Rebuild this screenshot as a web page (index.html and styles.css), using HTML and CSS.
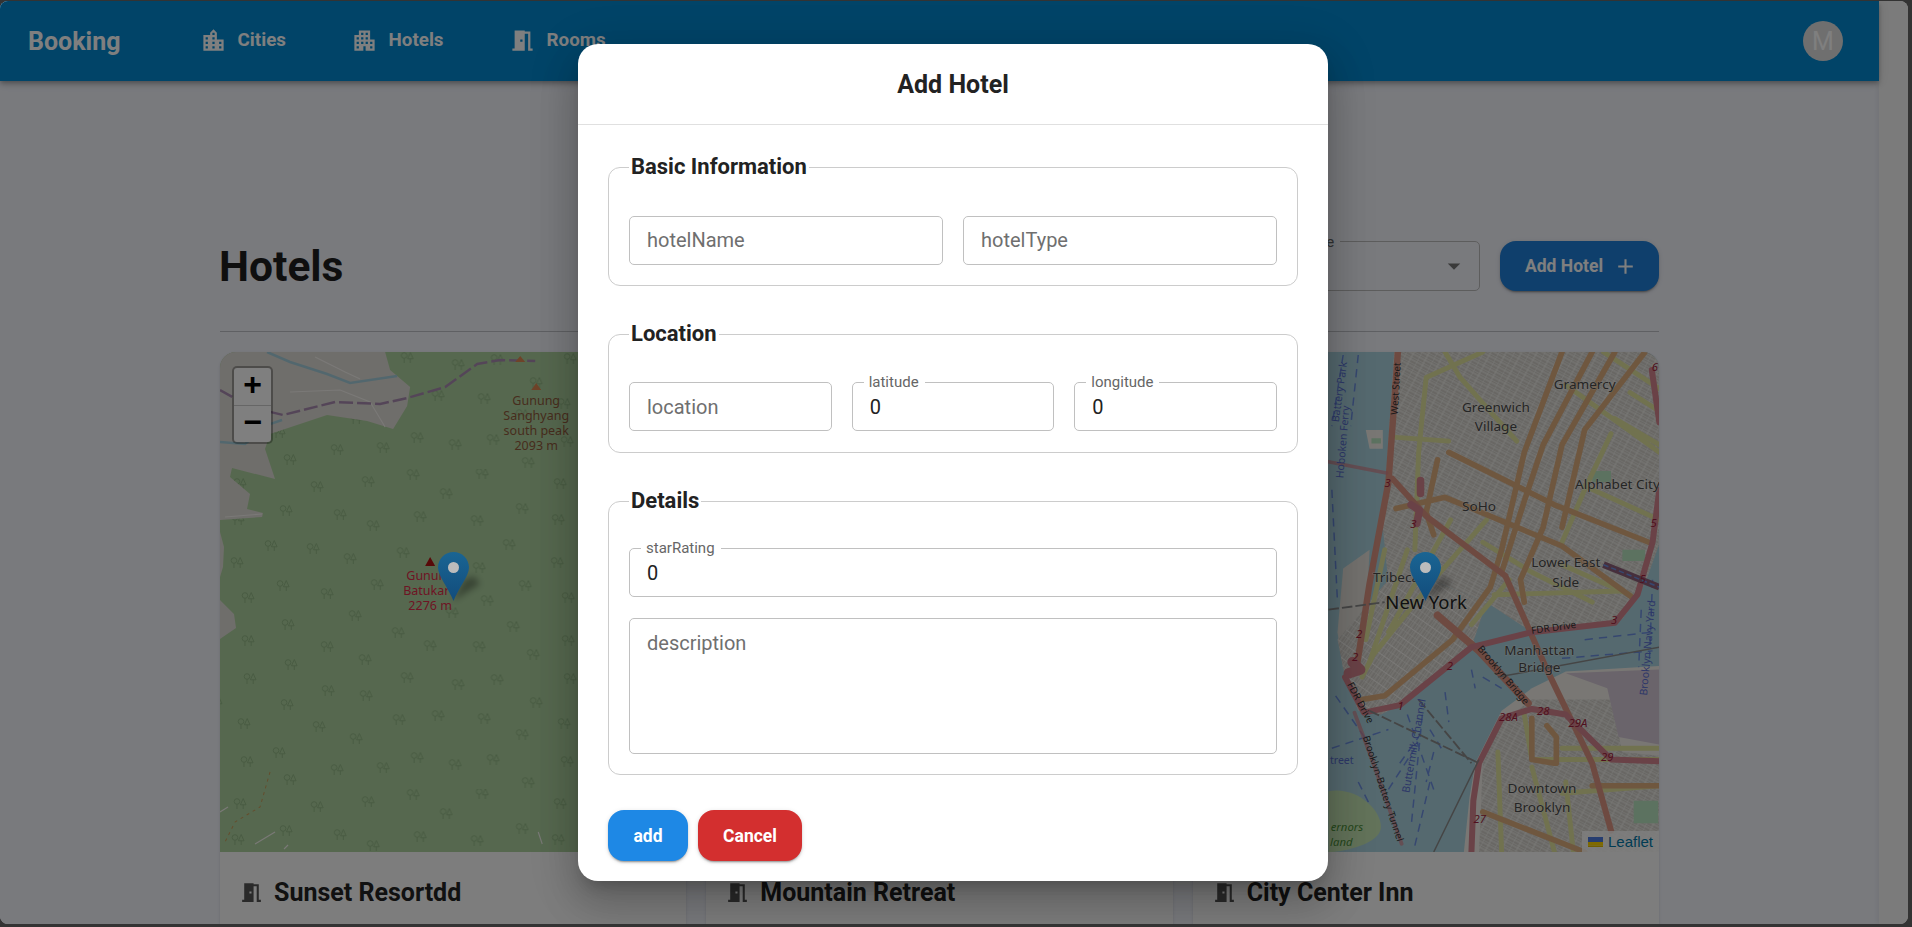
FILE: index.html

```html
<!DOCTYPE html>
<html>
<head>
    <title>Hotels</title>
    <link rel="stylesheet" href="styles.css">
</head>
<body>
    <div class="window">
        <div class="page">
            <header class="app-bar">
                <div class="brand">Booking</div>
                <nav class="nav">
                    <a class="nav-link">
                        <svg viewBox="0 0 24 24"><path d="M15 11V5l-3-3-3 3v2H3v14h18V11h-6zm-8 8H5v-2h2v2zm0-4H5v-2h2v2zm0-4H5V9h2v2zm6 8h-2v-2h2v2zm0-4h-2v-2h2v2zm0-4h-2V9h2v2zm0-4h-2V5h2v2zm6 12h-2v-2h2v2zm0-4h-2v-2h2v2z"/></svg>
                        Cities
                    </a>
                    <a class="nav-link">
                        <svg viewBox="0 0 24 24"><path d="M17 11V3H7v4H3v14h8v-4h2v4h8V11h-4zM7 19H5v-2h2v2zm0-4H5v-2h2v2zm0-4H5V9h2v2zm4 4H9v-2h2v2zm0-4H9V9h2v2zm0-4H9V5h2v2zm4 8h-2v-2h2v2zm0-4h-2V9h2v2zm0-4h-2V5h2v2zm4 12h-2v-2h2v2zm0-4h-2v-2h2v2z"/></svg>
                        Hotels
                    </a>
                    <a class="nav-link">
                        <svg viewBox="0 0 24 24"><path d="M14 6v15H3v-2h2V3h9v1h5v15h2v2h-4V6h-3zm-4 5v2h2v-2h-2z"/></svg>
                        Rooms
                    </a>
                </nav>
                <div class="avatar">M</div>
            </header>

            <main class="content">
                <div class="title-row">
                    <h1>Hotels</h1>
                    <div class="title-actions">
                        <div class="select-box">
                            <span class="select-label">hotelType</span>
                            <svg viewBox="0 0 24 24"><path d="M7 10l5 5 5-5z"/></svg>
                        </div>
                        <button class="add-hotel">
                            Add Hotel
                            <svg viewBox="0 0 24 24"><path d="M19 13h-6v6h-2v-6H5v-2h6V5h2v6h6v2z"/></svg>
                        </button>
                    </div>
                </div>
                <div class="divider"></div>

                <div class="cards">
                    <article class="card">
                        <div class="map">
                            <svg class="map-art" viewBox="0 0 466 500" preserveAspectRatio="none">
                                <defs>
                                    <g id="tree">
                                        <circle cx="-3" cy="-2.5" r="2.8"/>
                                        <path d="M-3 .3V5M3.2-5.5L6 .8H.4zM3.2.8V5"/>
                                    </g>
                                    <pattern id="forest" x="37" y="117" width="320" height="320" patternUnits="userSpaceOnUse">
                                        <g transform="translate(-37 -117)" fill="none" stroke="#8fb382" stroke-width=".9">
                                            <use href="#tree" x="97" y="135"/><use href="#tree" x="148" y="130"/><use href="#tree" x="193" y="123"/>
                                            <use href="#tree" x="262" y="122"/><use href="#tree" x="308" y="431"/><use href="#tree" x="340" y="132"/>
                                            <use href="#tree" x="226" y="142"/><use href="#tree" x="302" y="157"/><use href="#tree" x="338" y="168"/>
                                            <use href="#tree" x="257" y="169"/><use href="#tree" x="200" y="165"/><use href="#tree" x="153" y="174"/>
                                            <use href="#tree" x="120" y="163"/><use href="#tree" x="66" y="159"/><use href="#tree" x="51" y="194"/>
                                            <use href="#tree" x="93" y="197"/><use href="#tree" x="130" y="207"/><use href="#tree" x="183" y="201"/>
                                            <use href="#tree" x="259" y="216"/><use href="#tree" x="289" y="193"/><use href="#tree" x="337" y="211"/>
                                            <use href="#tree" x="63" y="234"/><use href="#tree" x="107" y="242"/><use href="#tree" x="157" y="233"/>
                                            <use href="#tree" x="305" y="234"/><use href="#tree" x="267" y="249"/><use href="#tree" x="348" y="246"/>
                                            <use href="#tree" x="68" y="273"/><use href="#tree" x="135" y="264"/><use href="#tree" x="232" y="261"/>
                                            <use href="#tree" x="178" y="281"/><use href="#tree" x="293" y="275"/><use href="#tree" x="348" y="289"/>
                                            <use href="#tree" x="107" y="295"/><use href="#tree" x="210" y="294"/><use href="#tree" x="259" y="295"/>
                                            <use href="#tree" x="313" y="303"/><use href="#tree" x="145" y="308"/><use href="#tree" x="71" y="313"/>
                                            <use href="#tree" x="350" y="327"/><use href="#tree" x="187" y="326"/><use href="#tree" x="238" y="333"/>
                                            <use href="#tree" x="277" y="328"/><use href="#tree" x="108" y="339"/><use href="#tree" x="146" y="344"/>
                                            <use href="#tree" x="67" y="353"/><use href="#tree" x="316" y="351"/><use href="#tree" x="344" y="372"/>
                                            <use href="#tree" x="99" y="375"/><use href="#tree" x="179" y="368"/><use href="#tree" x="218" y="364"/>
                                            <use href="#tree" x="264" y="367"/><use href="#tree" x="136" y="387"/><use href="#tree" x="302" y="383"/>
                                            <use href="#tree" x="59" y="401"/><use href="#tree" x="347" y="410"/><use href="#tree" x="117" y="418"/>
                                            <use href="#tree" x="163" y="416"/><use href="#tree" x="197" y="406"/><use href="#tree" x="235" y="413"/>
                                            <use href="#tree" x="273" y="408"/><use href="#tree" x="70" y="428"/>
                                        </g>
                                    </pattern>
                                </defs>
                                <rect width="466" height="500" fill="#add19e"/>
                                <rect width="466" height="500" fill="url(#forest)"/>
                                <path fill="#dfdcd6" d="M0 0H165L170 18 190 35 187 54 173 77 147 69 107 63 50 82 45 97 55 127 12 116 10 125 30 142 27 157 43 161 42 165 0 168Z"/>
                                <path fill="#dfdcd6" d="M0 180 4 195 3 215 0 225ZM0 248 14 262 16 276 0 287Z"/>
                                <path fill="none" stroke="#a5cfdc" stroke-width="2.5" d="M47 0 70 10 107 22 130 31 177 24"/>
                                <path fill="none" stroke="#a5cfdc" stroke-width="2.5" d="M0 90 25 92 50 72 62 68"/>
                                <path fill="none" stroke="#f4f2ee" stroke-width="1.1" d="M95 5 125 20 140 27M70 40 120 38 150 50 165 75M5 165 42 162M0 460 8 455M35 492 55 480M64 497 68 493M318 480 322 492"/>
                                <path fill="none" stroke="#a98bb0" stroke-width="2.5" stroke-dasharray="14 4" d="M0 38 30 55 63 63 115 50 160 52 187 46 225 35 257 12 280 8 315 9"/>
                                <path fill="none" stroke="#c79a5b" stroke-width="1" stroke-dasharray="3 4" d="M50 420 40 455 15 470 5 490"/>
                                <path fill="#dd8753" d="M300 4 305 10H295ZM316 31 321 38H311Z"/>
                                <path fill="#b01212" d="M210 205 215 214H205Z"/>
                                <g class="peak-label">
                                    <text x="316" y="53">Gunung</text>
                                    <text x="316" y="68">Sanghyang</text>
                                    <text x="316" y="83">south peak</text>
                                    <text x="316" y="98">2093 m</text>
                                </g>
                                <g class="peak-label red">
                                    <text x="210" y="228">Gunung</text>
                                    <text x="210" y="243">Batukaru</text>
                                    <text x="210" y="258">2276 m</text>
                                </g>
                            </svg>
                            <div class="zoom-control">
                                <a>+</a>
                                <a>&minus;</a>
                            </div>
                            <svg class="marker" viewBox="0 0 31 49">
                                <defs>
                                    <linearGradient id="pin-a" x1="0" y1="0" x2="0" y2="1"><stop offset="0" stop-color="#1a6593"/><stop offset="1" stop-color="#124c7c"/></linearGradient>
                                    <filter id="pin-blur" x="-50%" y="-50%" width="200%" height="200%"><feGaussianBlur stdDeviation="3"/></filter>
                                </defs>
                                <path d="M15 49 42 32 36 24 26 28Z" fill="#000" opacity=".32" filter="url(#pin-blur)"/>
                                <path fill="url(#pin-a)" d="M15.5 0C7 0 0 6.8 0 15.5 0 24 11 37 15.5 49 20 37 31 24 31 15.5 31 6.8 24 0 15.5 0Z"/>
                                <circle cx="15.5" cy="15.5" r="5.5" fill="#bcbcbc"/>
                            </svg>
                        </div>
                        <h3 class="card-title">
                            <svg viewBox="0 0 24 24"><path d="M14 6v15H3v-2h2V3h9v1h5v15h2v2h-4V6h-3zm-4 5v2h2v-2h-2z"/></svg>
                            Sunset Resortdd
                        </h3>
                    </article>

                    <article class="card">
                        <div class="map"></div>
                        <h3 class="card-title">
                            <svg viewBox="0 0 24 24"><path d="M14 6v15H3v-2h2V3h9v1h5v15h2v2h-4V6h-3zm-4 5v2h2v-2h-2z"/></svg>
                            Mountain Retreat
                        </h3>
                    </article>

                    <article class="card">
                        <div class="map">
                            <!-- drawn in units of 2.65 per pixel, right edge at 898 -->
                            <svg class="map-art" viewBox="-338 32 1236 1335" preserveAspectRatio="none">
                                <defs>
                                    <pattern id="blocks-a" width="36" height="15" patternUnits="userSpaceOnUse" patternTransform="rotate(28)">
                                        <rect width="36" height="15" fill="#d2cfc9"/>
                                        <path d="M0 0H36M0 7.5H36M0 0V15M18 0V15" stroke="#f6f4f0" stroke-width="2.4" fill="none"/>
                                    </pattern>
                                    <pattern id="blocks-b" width="34" height="15" patternUnits="userSpaceOnUse" patternTransform="rotate(-55)">
                                        <rect width="34" height="15" fill="#d2cfc9"/>
                                        <path d="M0 0H34M0 7.5H34M0 0V15M17 0V15" stroke="#f6f4f0" stroke-width="2.4" fill="none"/>
                                    </pattern>
                                </defs>
                                <rect x="-338" y="32" width="1236" height="1335" fill="#aad3df"/>
                                <g fill="none" stroke="#6d8fe0" stroke-width="4" stroke-dasharray="22 16">
                                    <path d="M60 40 30 230M100 40 80 230M30 400 45 700M700 800 880 780M640 850 880 830M850 720 840 950M880 640 870 900"/>
                                    <path d="M230 1000 300 1200M270 1000 240 1300M330 940 340 1020M400 880 410 930M430 900 480 930M40 950 130 1080M30 1090 180 1040"/>
                                    <path d="M180 1200 250 1090M250 1350 290 1180M100 1180 130 1240M290 1040 320 1090M210 1130 260 1060M300 1100 280 1180"/>
                                </g>
                                <path fill="#e6e3dc" d="M60 610 130 560 120 760 60 880 45 780Z"/>
                                <path fill="url(#blocks-a)" d="M195 32H898V545L860 650 800 745 560 780 440 700 290 640 180 650 165 500Z"/>
                                <path fill="url(#blocks-b)" d="M180 640 290 640 440 700 400 820 240 960 160 1000 100 990 65 900 45 800Z"/>
                                <path fill="#f2efe9" d="M898 870 650 885 560 930 480 990 410 1130 395 1220 380 1367H898Z"/>
                                <path fill="url(#blocks-a)" d="M560 960 770 960 800 1100 898 1110V1367H420L430 1130 480 1020Z"/>
                                <path fill="#d5c8d6" d="M650 890 898 880V1080L790 1060 760 930Z"/>
                                <path fill="#c7e7b4" d="M21 1205C90 1190 160 1250 160 1300 160 1345 60 1367 21 1367Z"/>
                                <path fill="#f2efe9" d="M120 240H165V290H130Z"/>
                                <path fill="#b9e4c0" d="M135 262H160V276H135ZM720 350H770V380H720ZM800 560H860V590H800ZM830 1230H895V1290H830Z"/>
                                <g fill="none" stroke="#e3e59e" stroke-width="13" stroke-linecap="round" stroke-linejoin="round">
                                    <path d="M430 32 280 100 260 300 250 560M330 32 370 100 440 180 520 270"/>
                                    <path d="M750 32 898 130M650 120 898 300M770 250 700 400 640 540"/>
                                    <path d="M200 260 340 270M440 480 300 640 140 840 110 900M170 560 120 800"/>
                                    <path d="M460 680 800 670M540 1000 560 1120H898M640 1090 898 1090M560 1140 620 1367"/>
                                    <path d="M345 480 180 780M500 640 400 760M230 560 130 860M430 540 560 620 720 700M640 600 820 680"/>
                                    <path d="M700 390 898 480M780 210 898 280M820 140 898 190M470 1100 480 1367M640 1210 898 1190M670 1367 650 1180"/>
                                </g>
                                <g fill="none" stroke="#dfae7e" stroke-width="15" stroke-linecap="round" stroke-linejoin="round">
                                    <path d="M340 300 620 440 870 540"/>
                                    <path d="M200 450 330 420 640 550 830 690"/>
                                    <path d="M640 32 540 300 480 560 450 660 350 800 170 950 110 960"/>
                                    <path d="M720 32 590 280 540 430 480 620"/>
                                    <path d="M780 32 640 280 590 500 530 640 540 700"/>
                                    <path d="M860 32 700 240 640 500"/>
                                    <path d="M310 320 280 460 300 520"/>
                                    <path d="M560 1010V1120L620 1130M600 1030 625 1060V1130M430 1260 700 1367M720 1190H898"/>
                                </g>
                                <g fill="none" stroke="#dd9483" stroke-linecap="round" stroke-linejoin="round">
                                    <path stroke-width="17" d="M205 32 180 380 130 650 95 880"/>
                                    <path stroke-width="16" d="M190 370 280 470 450 600 490 630 600 880 720 1130 770 1310"/>
                                    <path stroke-width="20" d="M310 735 420 830 550 970"/>
                                </g>
                                <g fill="none" stroke="#d5848f" stroke-width="16" stroke-linecap="round" stroke-linejoin="round">
                                    <path d="M65 900 115 995 210 975 400 820 560 780 780 755 840 680 880 540 898 400"/>
                                    <path d="M878 80 898 220"/>
                                    <path d="M898 1125 770 1120 700 1050 650 1000 560 985 480 1010 420 1130 405 1230 400 1367"/>
                                    <path stroke-width="28" d="M85 860 105 880 75 890"/>
                                    <path stroke-width="10" opacity=".7" d="M21 325 175 355M90 995 140 1130 215 1345"/>
                                    <path stroke-width="20" d="M240 440 262 455 255 490M265 375V410"/>
                                </g>
                                <path fill="none" stroke="#8d5f78" stroke-width="18" d="M750 600 898 660"/>
                                <path fill="none" stroke="#6d8fe0" stroke-width="4" stroke-dasharray="14 8" d="M750 600 898 660"/>
                                <g fill="none" stroke="#8b8b8b" stroke-width="5">
                                    <path stroke-dasharray="28 8" d="M130 990 420 1130M260 960 400 1130M21 720 170 700"/>
                                    <path stroke-width="4" d="M300 1367 420 1120M470 900 900 820"/>
                                </g>
                                <g class="place-label">
                                    <text x="700" y="132">Gramercy</text>
                                    <text x="465" y="192">Greenwich</text>
                                    <text x="465" y="244">Village</text>
                                    <text x="787" y="399">Alphabet City</text>
                                    <text x="420" y="456">SoHo</text>
                                    <text x="200" y="647">Tribeca</text>
                                    <text class="big" x="280" y="717">New York</text>
                                    <text x="650" y="607">Lower East</text>
                                    <text x="650" y="659">Side</text>
                                    <text x="580" y="841">Manhattan</text>
                                    <text x="580" y="886">Bridge</text>
                                    <text x="587" y="1209">Downtown</text>
                                    <text x="587" y="1261">Brooklyn</text>
                                </g>
                                <g class="road-num">
                                    <text x="178" y="392">3</text><text x="246" y="502">3</text><text x="102" y="796">2</text>
                                    <text x="92" y="858">2</text><text x="343" y="880">2</text><text x="212" y="988">1</text>
                                    <text x="854" y="648">5</text><text x="883" y="500">5</text><text x="778" y="758">3</text>
                                    <text x="590" y="1000">28</text><text x="498" y="1016">28A</text><text x="682" y="1032">29A</text>
                                    <text x="760" y="1124">29</text><text x="422" y="1290">27</text><text x="886" y="82">6</text>
                                </g>
                                <g class="road-name">
                                    <text transform="translate(205 200) rotate(-87)">West Street</text>
                                    <text transform="translate(560 785) rotate(-8)">FDR Drive</text>
                                    <text transform="translate(415 825) rotate(50)">Brooklyn Bridge</text>
                                    <text transform="translate(70 920) rotate(62)">FDR Drive</text>
                                    <text transform="translate(112 1060) rotate(72)">Brooklyn-Battery Tunnel</text>
                                </g>
                                <g class="water-name">
                                    <text transform="translate(48 220) rotate(-82)">Battery Park</text>
                                    <text transform="translate(60 370) rotate(-85)">Hoboken Ferry</text>
                                    <text transform="translate(865 950) rotate(-85)">Brooklyn Navy Yard</text>
                                    <text x="25" y="1132">treet</text>
                                    <text transform="translate(235 1210) rotate(-80)">Buttermilk Channel</text>
                                </g>
                                <g class="park-label">
                                    <text x="70" y="1312">ernors</text>
                                    <text x="55" y="1350">land</text>
                                </g>
                            </svg>
                            <svg class="marker" viewBox="0 0 31 49">
                                <path d="M15 49 42 32 36 24 26 28Z" fill="#000" opacity=".32" filter="url(#pin-blur)"/>
                                <path fill="url(#pin-a)" d="M15.5 0C7 0 0 6.8 0 15.5 0 24 11 37 15.5 49 20 37 31 24 31 15.5 31 6.8 24 0 15.5 0Z"/>
                                <circle cx="15.5" cy="15.5" r="5.5" fill="#bcbcbc"/>
                            </svg>
                            <div class="attribution">
                                <svg viewBox="0 0 12 8"><path fill="#4c7be1" d="M0 0h12v4H0z"/><path fill="#ffd500" d="M0 4h12v3H0z"/><path fill="#e0bc00" d="M0 7h12v1H0z"/></svg>
                                <a>Leaflet</a>
                            </div>
                        </div>
                        <h3 class="card-title">
                            <svg viewBox="0 0 24 24"><path d="M14 6v15H3v-2h2V3h9v1h5v15h2v2h-4V6h-3zm-4 5v2h2v-2h-2z"/></svg>
                            City Center Inn
                        </h3>
                    </article>
                </div>
            </main>
        </div>
        <div class="scroll-track"></div>

        <div class="backdrop"></div>
        <div class="dialog-root">
            <form class="dialog">
                <h2 class="dialog-title">Add Hotel</h2>
                <div class="dialog-body">
                    <fieldset class="basic">
                        <legend>Basic Information</legend>
                        <div class="row two">
                            <div class="field"><input type="text" placeholder="hotelName"></div>
                            <div class="field"><input type="text" placeholder="hotelType"></div>
                        </div>
                    </fieldset>
                    <fieldset class="location">
                        <legend>Location</legend>
                        <div class="row three">
                            <div class="field"><input type="text" placeholder="location"></div>
                            <div class="field"><label>latitude</label><input type="text" value="0"></div>
                            <div class="field"><label>longitude</label><input type="text" value="0"></div>
                        </div>
                    </fieldset>
                    <fieldset class="details">
                        <legend>Details</legend>
                        <div class="row">
                            <div class="field"><label>starRating</label><input type="text" value="0"></div>
                            <div class="field"><textarea placeholder="description"></textarea></div>
                        </div>
                    </fieldset>
                </div>
                <div class="dialog-actions">
                    <button type="button" class="btn-add">add</button>
                    <button type="button" class="btn-cancel">Cancel</button>
                </div>
            </form>
        </div>
    </div>
</body>
</html>
```

FILE: styles.css

```css
* {
    box-sizing: border-box;
}

body {
    margin: 0;
    padding-top: 1px;
    height: 927px;
    overflow: hidden;
    background-color: #333;
    font-family: Roboto, sans-serif;
    color: #222;
}

.window {
    position: relative;
    display: flex;
    width: 1908px;
    height: 923px;
    border-radius: 8px;
    overflow: hidden;
}

.page {
    flex: 1;
    min-width: 0;
    background-color: #f2f4fb;
}

.scroll-track {
    width: 29px;
    background-color: #f6f6f6;
    box-shadow: -2px 0 4px rgba(0, 0, 0, 0.05);
}

/* app bar */

.app-bar {
    display: flex;
    align-items: center;
    height: 80px;
    padding: 0 36px 0 28px;
    background-color: #0288d1;
    color: white;
    box-shadow: 0 2px 4px -1px rgba(0, 0, 0, 0.2), 0 4px 5px rgba(0, 0, 0, 0.14), 0 1px 10px rgba(0, 0, 0, 0.12);
    position: relative;
}

.brand {
    font-size: 25px;
    font-weight: 700;
    width: 171.6px;
    margin-top: 1px;
}

.nav {
    display: flex;
    flex: 1;
}

.nav-link {
    display: flex;
    align-items: center;
    gap: 11px;
    width: 151px;
    font-size: 18.75px;
    font-weight: 700;
    margin-top: -2px;
}

.nav-link:nth-child(2) {
    width: 158px;
}

.nav-link svg {
    width: 27px;
    height: 27px;
    fill: white;
}

.avatar {
    display: flex;
    align-items: center;
    justify-content: center;
    width: 40px;
    height: 40px;
    border-radius: 50%;
    background-color: #dedede;
    color: #fff;
    font-size: 25px;
}

/* page content */

.content {
    padding: 160px 220px 0;
}

.title-row {
    display: flex;
    align-items: center;
    justify-content: space-between;
    height: 50px;
}

h1 {
    margin: 0 0 0 -1px;
    font-size: 42.5px;
    font-weight: 700;
    color: #1f1f1f;
}

.title-actions {
    display: flex;
    gap: 20px;
}

.select-box {
    position: relative;
    display: flex;
    align-items: center;
    justify-content: flex-end;
    width: 230px;
    height: 50px;
    padding-right: 10px;
    border: 1px solid #bbb;
    border-radius: 5px;
}

.select-box svg {
    width: 30px;
    height: 30px;
    fill: #757575;
}

.select-label {
    position: absolute;
    top: -9px;
    left: 12px;
    padding: 0 6px;
    font-size: 15px;
    color: #666;
    background-color: #f2f4fb;
}

.add-hotel {
    display: flex;
    align-items: center;
    gap: 10px;
    width: 159px;
    height: 50px;
    padding: 0 0 0 25px;
    border: none;
    border-radius: 16px;
    background-color: #1f7fd8;
    color: white;
    font-family: inherit;
    font-size: 17.5px;
    font-weight: 700;
    box-shadow: 0 3px 1px -2px rgba(0, 0, 0, 0.2), 0 2px 2px rgba(0, 0, 0, 0.14), 0 1px 5px rgba(0, 0, 0, 0.12);
}

.add-hotel svg {
    width: 25px;
    height: 25px;
    fill: white;
}

.divider {
    margin: 40px 0 20px;
    border-top: 1px solid #bfc1c6;
}

.cards {
    display: grid;
    grid-template-columns: repeat(3, 1fr);
    gap: 20px;
}

.card {
    height: 640px;
    border-radius: 16px;
    overflow: hidden;
    background-color: #fafafa;
    box-shadow: 0 1px 3px rgba(0, 0, 0, 0.12);
}

.map {
    position: relative;
    height: 500px;
    background-color: #ddd;
}

.map-art {
    display: block;
    width: 100%;
    height: 100%;
}

.card-title {
    display: flex;
    align-items: center;
    gap: 10px;
    margin: 0;
    padding: 26px 0 0 19px;
    font-size: 25px;
    font-weight: 700;
    line-height: 29px;
    color: #222;
}

.card-title svg {
    width: 25px;
    height: 25px;
    fill: #555;
}

/* leaflet bits */

.zoom-control {
    position: absolute;
    top: 14px;
    left: 12px;
    width: 41px;
    border: 2px solid rgba(0, 0, 0, 0.3);
    border-radius: 5px;
    background-color: white;
    background-clip: padding-box;
}

.zoom-control a {
    display: block;
    height: 37px;
    font-family: "Liberation Mono", monospace;
    font-size: 32px;
    font-weight: 700;
    line-height: 37px;
    text-align: center;
    color: black;
}

.zoom-control a + a {
    border-top: 1px solid #ccc;
}

.marker {
    position: absolute;
    top: 200px;
    left: calc(50% - 15.5px);
    width: 31px;
    height: 49px;
    overflow: visible;
    z-index: 11;
}

.attribution {
    position: absolute;
    right: 0;
    bottom: 0;
    display: flex;
    align-items: center;
    gap: 5px;
    height: 21px;
    padding: 0 6px;
    background-color: rgba(255, 255, 255, 0.8);
    font-family: "Liberation Sans", sans-serif;
    font-size: 15px;
    color: #0078a8;
}

.attribution svg {
    width: 15px;
    height: 10px;
}

.peak-label text {
    font-family: "Noto Sans", sans-serif;
    font-size: 12.5px;
    text-anchor: middle;
    fill: #8f5a3c;
}

.peak-label.red text {
    fill: #dc2a48;
}

.place-label text {
    font-family: "Noto Sans", sans-serif;
    font-size: 36px;
    text-anchor: middle;
    fill: #4a4a4a;
    stroke: #f2efe9;
    stroke-width: 3px;
    stroke-opacity: 0.6;
    paint-order: stroke;
}

.place-label text.big {
    font-size: 49px;
    fill: #222;
}

.road-num text {
    font-family: "Noto Sans", sans-serif;
    font-size: 30px;
    font-style: italic;
    text-anchor: middle;
    fill: #a01f3c;
}

.road-name text {
    font-family: "Noto Sans", sans-serif;
    font-size: 26px;
    fill: #333;
}

.water-name text {
    font-family: "Noto Sans", sans-serif;
    font-size: 28px;
    fill: #5a6fd0;
}

.park-label text {
    font-family: "Noto Sans", sans-serif;
    font-size: 30px;
    font-style: italic;
    text-anchor: middle;
    fill: #4b8f3b;
}

/* dialog */

.backdrop {
    position: absolute;
    top: 0;
    right: 0;
    bottom: 0;
    left: 0;
    background-color: rgba(0, 0, 0, 0.5);
    z-index: 10;
}

.dialog-root {
    position: absolute;
    top: 0;
    right: 2px;
    bottom: 0;
    left: 0;
    display: flex;
    align-items: center;
    justify-content: center;
    z-index: 12;
}

.dialog {
    width: 750px;
    height: 837px;
    border-radius: 20px;
    background-color: white;
    box-shadow: 0 11px 15px -7px rgba(0, 0, 0, 0.2), 0 24px 38px 3px rgba(0, 0, 0, 0.14), 0 9px 46px 8px rgba(0, 0, 0, 0.12);
}

.dialog-title {
    height: 81px;
    margin: 0;
    border-bottom: 1px solid #e0e0e0;
    font-size: 25px;
    font-weight: 700;
    line-height: 82px;
    text-align: center;
    color: #222;
}

.dialog-body {
    display: flex;
    flex-direction: column;
    gap: 33px;
    padding: 27px 30px 0;
}

fieldset {
    min-width: 0;
    margin: 0;
    padding: 34px 20px 20px;
    border: 1px solid #ccc;
    border-radius: 12px;
}

fieldset.location {
    padding-top: 33px;
    padding-bottom: 21px;
}

fieldset.details {
    padding-top: 32px;
}

legend {
    padding: 0 2px;
    font-size: 22px;
    font-weight: 700;
    line-height: 30px;
    color: #222;
}

.row {
    display: grid;
    gap: 21px 20px;
}

.row.two {
    grid-template-columns: repeat(2, 1fr);
}

.row.three {
    grid-template-columns: repeat(3, 1fr);
}

.field {
    position: relative;
}

.field input,
.field textarea {
    display: block;
    width: 100%;
    height: 49px;
    padding: 0 17px;
    border: 1px solid #c0c0c0;
    border-radius: 5px;
    outline: none;
    font-family: inherit;
    font-size: 20px;
    color: #222;
    resize: none;
}

fieldset.basic input {
    padding-bottom: 1px;
}

.field textarea {
    height: 136px;
    padding-top: 12px;
}

.field input::placeholder,
.field textarea::placeholder {
    color: #6f6f6f;
    opacity: 1;
}

.field label {
    position: absolute;
    top: -9px;
    left: 12px;
    padding: 0 6px 0 5px;
    font-size: 15px;
    line-height: 18px;
    color: #666;
    background-color: white;
}

.dialog-actions {
    display: flex;
    gap: 10px;
    padding: 35px 30px 0;
}

.dialog-actions button {
    height: 51px;
    border: none;
    border-radius: 16px;
    color: white;
    font-family: inherit;
    font-size: 17.5px;
    font-weight: 700;
    box-shadow: 0 3px 1px -2px rgba(0, 0, 0, 0.2), 0 2px 2px rgba(0, 0, 0, 0.14), 0 1px 5px rgba(0, 0, 0, 0.12);
}

.btn-add {
    width: 80px;
    background-color: #1e88e5;
}

.btn-cancel {
    width: 104px;
    background-color: #d32f2f;
}
```
